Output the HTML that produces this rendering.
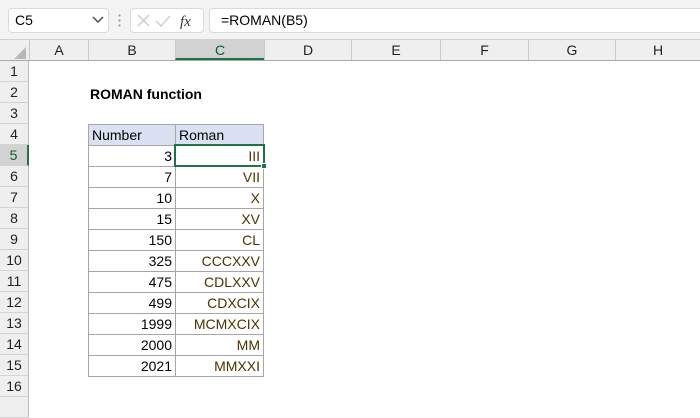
<!DOCTYPE html><html><head><style>
body{margin:0;width:700px;height:400px;overflow:hidden;background:#fff;font-family:"Liberation Sans",Calibri,sans-serif;position:relative}
.a{position:absolute;box-sizing:border-box}
.tb{left:0;top:0;width:700px;height:40px;background:#f3f3f3;border-bottom:1px solid #d0d0d0}
.hd{background:#efefef;color:#222;font-size:14px;text-align:center;line-height:20px}
.rh{left:0;width:29px;height:21px;background:#efefef;border-right:1px solid #bdbdbd;border-bottom:1px solid #d4d4d4;font-size:14px;text-align:center;line-height:21px;color:#222}
.c{font-size:14px;line-height:20px;border:1px solid #a6a6a6;padding:0 3px;height:22px}
.r{color:#4a3300;text-align:right}
.n{text-align:right;color:#000}
</style></head><body>
<div class="a tb"></div>
<div class="a" style="left:8px;top:8px;width:101px;height:25px;background:#fff;border:1px solid #dadada;border-radius:4px;font-size:14px;line-height:23px;padding-left:6px">C5</div>
<svg class="a" style="left:92px;top:16px" width="12" height="8"><path d="M1 1 L6 6 L11 1" stroke="#444" stroke-width="1.4" fill="none"/></svg>
<div class="a" style="left:118px;top:13px;width:3px;height:14px;background:radial-gradient(circle,#999 1px,transparent 1.2px) 0 0/3px 5px"></div>
<div class="a" style="left:130px;top:8px;width:74px;height:25px;background:#fff;border:1px solid #dadada;border-radius:4px"></div>
<svg class="a" style="left:136px;top:13px" width="60" height="16"><path d="M2 2 L13 13 M13 2 L2 13" stroke="#c8c8c8" stroke-width="1.3"/><path d="M20 8 L25 13 L34 3" stroke="#c8c8c8" stroke-width="1.3" fill="none"/><text x="44" y="13" font-family="Liberation Serif" font-style="italic" font-size="15" fill="#333">fx</text></svg>
<div class="a" style="left:209px;top:8px;width:500px;height:25px;background:#fff;border:1px solid #dadada;border-radius:4px;font-size:14px;line-height:23px;padding-left:11px">=ROMAN(B5)</div>
<div class="a hd" style="left:0;top:40px;width:700px;height:21px;border-bottom:1px solid #a8a8a8"></div>
<svg class="a" style="left:14px;top:47px" width="12" height="12"><path d="M12 0 L12 12 L0 12Z" fill="#b8b8b8"/></svg>
<div class="a hd" style="left:29px;top:40px;width:59px;height:20px;border-left:1px solid #c8c8c8">A</div>
<div class="a hd" style="left:88px;top:40px;width:87px;height:20px;border-left:1px solid #c8c8c8">B</div>
<div class="a hd" style="left:175px;top:40px;width:89px;height:20px;border-left:1px solid #c8c8c8;background:#d2d2d2;color:#0f5c2e;border-bottom:2px solid #217346">C</div>
<div class="a hd" style="left:264px;top:40px;width:87px;height:20px;border-left:1px solid #c8c8c8">D</div>
<div class="a hd" style="left:351px;top:40px;width:89px;height:20px;border-left:1px solid #c8c8c8">E</div>
<div class="a hd" style="left:440px;top:40px;width:88px;height:20px;border-left:1px solid #c8c8c8">F</div>
<div class="a hd" style="left:528px;top:40px;width:87px;height:20px;border-left:1px solid #c8c8c8">G</div>
<div class="a hd" style="left:615px;top:40px;width:85px;height:20px;border-left:1px solid #c8c8c8">H</div>
<div class="a rh" style="top:61px">1</div><div class="a rh" style="top:82px">2</div><div class="a rh" style="top:103px">3</div><div class="a rh" style="top:124px">4</div>
<div class="a rh" style="top:145px;background:#d2d2d2;color:#0f5c2e;border-right:2px solid #217346">5</div>
<div class="a rh" style="top:166px">6</div><div class="a rh" style="top:187px">7</div><div class="a rh" style="top:208px">8</div><div class="a rh" style="top:229px">9</div><div class="a rh" style="top:250px">10</div><div class="a rh" style="top:271px">11</div><div class="a rh" style="top:292px">12</div><div class="a rh" style="top:313px">13</div><div class="a rh" style="top:334px">14</div><div class="a rh" style="top:355px">15</div><div class="a rh" style="top:376px">16</div><div class="a rh" style="top:397px"></div>
<div class="a" style="left:90px;top:84px;font-size:14px;font-weight:bold;line-height:20px">ROMAN function</div>
<div class="a c" style="left:88px;top:124px;width:88px;background:#d9e1f2">Number</div>
<div class="a c" style="left:175px;top:124px;width:89px;background:#d9e1f2">Roman</div>
<div class="a c n" style="left:88px;top:145px;width:88px">3</div><div class="a c r" style="left:175px;top:145px;width:89px">III</div>
<div class="a c n" style="left:88px;top:166px;width:88px">7</div><div class="a c r" style="left:175px;top:166px;width:89px">VII</div>
<div class="a c n" style="left:88px;top:187px;width:88px">10</div><div class="a c r" style="left:175px;top:187px;width:89px">X</div>
<div class="a c n" style="left:88px;top:208px;width:88px">15</div><div class="a c r" style="left:175px;top:208px;width:89px">XV</div>
<div class="a c n" style="left:88px;top:229px;width:88px">150</div><div class="a c r" style="left:175px;top:229px;width:89px">CL</div>
<div class="a c n" style="left:88px;top:250px;width:88px">325</div><div class="a c r" style="left:175px;top:250px;width:89px">CCCXXV</div>
<div class="a c n" style="left:88px;top:271px;width:88px">475</div><div class="a c r" style="left:175px;top:271px;width:89px">CDLXXV</div>
<div class="a c n" style="left:88px;top:292px;width:88px">499</div><div class="a c r" style="left:175px;top:292px;width:89px">CDXCIX</div>
<div class="a c n" style="left:88px;top:313px;width:88px">1999</div><div class="a c r" style="left:175px;top:313px;width:89px">MCMXCIX</div>
<div class="a c n" style="left:88px;top:334px;width:88px">2000</div><div class="a c r" style="left:175px;top:334px;width:89px">MM</div>
<div class="a c n" style="left:88px;top:355px;width:88px">2021</div><div class="a c r" style="left:175px;top:355px;width:89px">MMXXI</div>
<div class="a" style="left:174px;top:144px;width:91px;height:23px;border:2px solid #217346"></div>
<div class="a" style="left:261px;top:163px;width:6px;height:6px;background:#217346;border:1px solid #fff"></div>
</body></html>
